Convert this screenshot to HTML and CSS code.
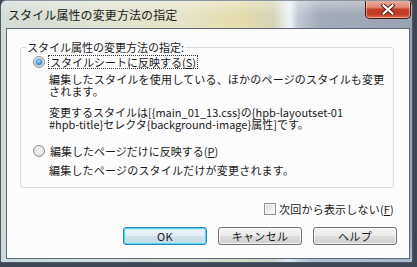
FILE: index.html
```html
<!DOCTYPE html>
<html lang="ja">
<head>
<meta charset="utf-8">
<title>スタイル属性の変更方法の指定</title>
<link rel="stylesheet" href="styles.css">
</head>
<body>
<div class="window">
  <div class="titlebar">
    <span class="title">スタイル属性の変更方法の指定</span>
    <div class="close">
      <svg width="14" height="11" viewBox="0 0 14 11">
        <path d="M2.5 1.5 L11.5 9.5 M11.5 1.5 L2.5 9.5" stroke="#5a1a10" stroke-width="4" stroke-linecap="square"/>
        <path d="M2.5 1.5 L11.5 9.5 M11.5 1.5 L2.5 9.5" stroke="#ffffff" stroke-width="2.2" stroke-linecap="square"/>
      </svg>
    </div>
  </div>
  <div class="client">
    <fieldset class="group">
      <legend class="group-label">スタイル属性の変更方法の指定:</legend>
      <div class="option">
        <span class="radio checked"></span>
        <span class="option-label focus">スタイルシートに反映する(<u>S</u>)</span>
      </div>
      <p class="desc first">編集したスタイルを使用している、ほかのページのスタイルも変更<br>されます。</p>
      <p class="desc detail">変更するスタイルは[{main_01_13.css}の{hpb-layoutset-01<br>#hpb-title}セレクタ{background-image}属性]です。</p>
      <div class="option second">
        <span class="radio"></span>
        <span class="option-label">編集したページだけに反映する(<u>P</u>)</span>
      </div>
      <p class="desc second-desc">編集したページのスタイルだけが変更されます。</p>
    </fieldset>
    <div class="check-row">
      <span class="checkbox"></span>
      <span class="check-label">次回から表示しない(<u>F</u>)</span>
    </div>
    <div class="buttons">
      <button class="btn default">OK</button>
      <button class="btn">キャンセル</button>
      <button class="btn">ヘルプ</button>
    </div>
  </div>
</div>
</body>
</html>
```

FILE: styles.css
```css
* { box-sizing: border-box; }

html, body {
  margin: 0;
  padding: 0;
}

body {
  width: 417px;
  height: 267px;
  overflow: hidden;
  background: #3e4654;
  font-family: "Noto Sans CJK JP", "Noto Sans", sans-serif;
  font-size: 11px;
  color: #1a1a1a;
}

.window {
  width: 413px;
  height: 263px;
  border-radius: 6px 6px 2px 2px;
  border: 1px solid #4f5a68;
  border-top-color: #8a95a2;
  background:
    linear-gradient(180deg, rgba(255,255,255,0.35) 0px, rgba(255,255,255,0) 14px, rgba(255,255,255,0) 230px, rgba(190,215,235,0.45) 262px),
    linear-gradient(90deg, #d3dbd6 0px, #e0e3d2 100px, #e6e4c8 180px, #e4dcaa 240px, #d6d4b6 272px, #eef3f8 289px, #c2c9d3 297px, #a3abb9 318px, #9aa3b2 413px);
  display: flex;
  flex-direction: column;
  overflow: hidden;
}

.titlebar {
  height: 27px;
  display: flex;
  justify-content: space-between;
  align-items: flex-start;
  padding-left: 7px;
  padding-right: 1px;
}

.title {
  font-size: 12px;
  line-height: 14px;
  margin-top: 7px;
  color: #1a1a1a;
  letter-spacing: 0.1px;
}

.close {
  width: 46px;
  height: 19px;
  margin-top: -1px;
  border: 1px solid #3f1810;
  border-top: none;
  border-radius: 0 0 5px 5px;
  background: linear-gradient(180deg, #eab0a2 0%, #dd8a72 40%, #c4402a 52%, #c23a22 78%, #dd6c4c 100%);
  box-shadow: inset 0 0 0 1px rgba(255,220,210,0.55);
  display: flex;
  align-items: center;
  justify-content: center;
}

.close svg { display: block; }

.client {
  margin: 0 2px 3px 5px;
  flex: 1;
  border: 1px solid #5c6a78;
  background: #fcfcfc;
  display: flex;
  flex-direction: column;
  padding-top: 11px;
}

.group {
  margin: 0 0 0 13px;
  width: 374px;
  border: 1px solid #d3dce2;
  border-radius: 3px;
  padding: 1px 0 11px 0;
  min-width: 0;
}

.group-label {
  margin-left: 5px;
  padding: 0 1px;
  font-size: 11px;
  line-height: 14px;
  background: #fcfcfc;
}

.option {
  display: flex;
  align-items: center;
  height: 14px;
  padding-left: 12px;
}

.option.second { margin-top: 14px; }

.radio {
  width: 12px;
  height: 12px;
  border-radius: 50%;
  border: 1px solid #8a8f94;
  background: radial-gradient(circle at 50% 40%, #f6f6f6 0%, #e2e3e4 70%, #cfd1d3 100%);
  display: flex;
  align-items: center;
  justify-content: center;
  margin-right: 3px;
  flex: none;
}

.radio.checked::after {
  content: "";
  width: 6px;
  height: 6px;
  border-radius: 50%;
  background: radial-gradient(circle at 45% 40%, #b7e2fb 0%, #4f9ad6 45%, #1f5b9e 100%);
  box-shadow: 0 0 0 1px rgba(60,120,180,0.35);
}

.option-label {
  line-height: 12px;
  padding: 0 1px;
  border: 1px solid transparent;
}

.option-label.focus {
  border: 1px dotted #333;
}

u { text-decoration: underline; text-underline-offset: 1px; }

.desc {
  margin: 0;
  padding-left: 28px;
  line-height: 12px;
  letter-spacing: 0.2px;
}

.desc.first { margin-top: 4px; }
.desc.detail { margin-top: 9px; letter-spacing: 0; }
.desc.second-desc { margin-top: 6px; }

.check-row {
  margin-top: 14px;
  display: flex;
  justify-content: flex-end;
  align-items: center;
  height: 14px;
  padding-right: 15px;
}

.checkbox {
  width: 12px;
  height: 12px;
  border: 1px solid #8e9296;
  background: linear-gradient(135deg, #d6d8da 0%, #eeeeef 60%, #fbfbfb 100%);
  box-shadow: inset 0 0 0 1px #f4f4f4;
  margin-right: 3px;
}

.check-label { line-height: 12px; letter-spacing: 0.2px; }

.buttons {
  margin-top: 11px;
  display: flex;
  justify-content: flex-end;
  gap: 11px;
  padding-right: 12px;
}

.btn {
  width: 84px;
  height: 18px;
  padding: 0;
  font-family: "Noto Sans CJK JP", "Noto Sans", sans-serif;
  font-size: 11px;
  line-height: 14px;
  color: #1a1a1a;
  border: 1px solid #707070;
  border-radius: 3px;
  background: linear-gradient(180deg, #f3f3f3 0%, #ebebeb 48%, #dddddd 52%, #cfcfcf 100%);
  box-shadow: inset 0 0 0 1px rgba(255,255,255,0.7);
  letter-spacing: 0.3px;
}

.btn.default {
  border-color: #3c7fb1;
  box-shadow: inset 0 0 0 1px #48d8fb, inset 0 0 0 2px rgba(180,235,252,0.6);
  background: linear-gradient(180deg, #eef6fa 0%, #e2eef5 48%, #d2e2ea 52%, #c6d6e0 100%);
}
```
